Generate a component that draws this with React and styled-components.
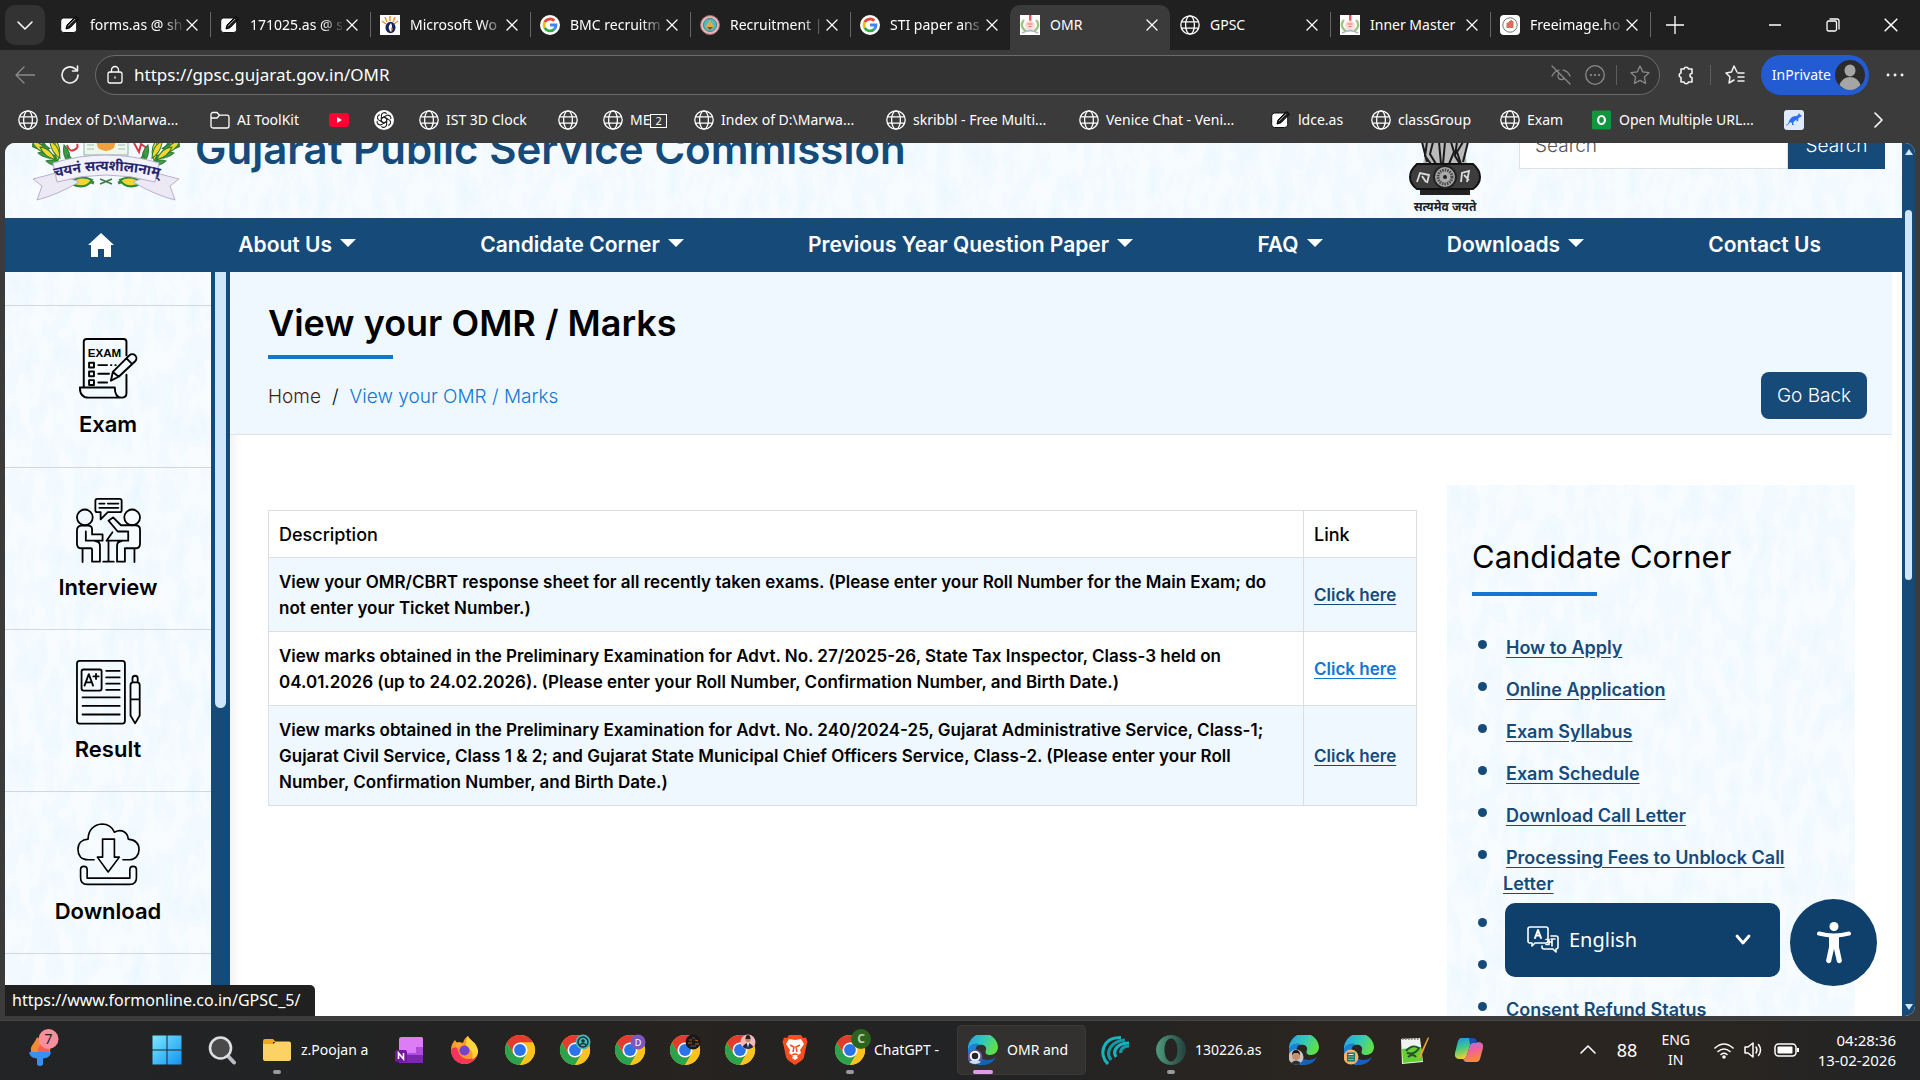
import React from "react";
import styled, { createGlobalStyle, css } from "styled-components";

const navy = "#164a79";
const siteFont = `Inter, "Noto Sans", "Liberation Sans", sans-serif`;
const uiFont = `"Noto Sans", "Open Sans", "Liberation Sans", sans-serif`;

const paper = `url("data:image/svg+xml,${encodeURIComponent(
  `<svg xmlns='http://www.w3.org/2000/svg' width='480' height='480'><filter id='n' x='0' y='0' width='100%' height='100%'><feTurbulence type='fractalNoise' baseFrequency='0.07 0.03' numOctaves='3' seed='8' stitchTiles='stitch'/><feColorMatrix values='0 0 0 0 0.84  0 0 0 0 0.94  0 0 0 0 1  1.9 0 0 0 -0.6'/></filter><rect width='480' height='480' filter='url(#n)'/></svg>`
)}")`;

const Global = createGlobalStyle`
  * { box-sizing: border-box; }
  body { margin: 0; background: #3b3b3b; font-family: ${siteFont}; color: #000; overflow: hidden; }
  button, input, select { font: inherit; }
  button { cursor: pointer; }
  svg { display: block; flex: none; }
`;

const textured = css`
  background: #f8fcff ${paper};
`;

const Screen = styled.div`
  display: flex;
  flex-direction: column;
  height: 100vh;
`;

const PlainButton = styled.button`
  display: flex;
  align-items: center;
  justify-content: center;
  padding: 0;
  border: 0;
  background: none;
  color: inherit;
`;

/* ---------- tab strip ---------- */
const TabStrip = styled.div`
  display: flex;
  align-items: flex-end;
  height: 50px;
  flex: none;
  background: #202020;
  color: #fff;
  font: 14px/20px ${uiFont};
`;
const TabMenu = styled(PlainButton)`
  width: 40px;
  height: 40px;
  margin: 0 5px 5px;
  border-radius: 10px;
  background: #333;
`;
const Tab = styled.div`
  position: relative;
  display: flex;
  align-items: center;
  gap: 10px;
  width: 160px;
  height: 45px;
  padding: 0 8px 5px 10px;
  border-radius: 10px 10px 0 0;
  background: ${(p) => (p.$active ? "#3b3b3b" : "transparent")};
  &::after {
    content: "";
    display: ${(p) => (p.$rule ? "block" : "none")};
    position: absolute;
    right: -1px;
    top: 7px;
    width: 1px;
    height: 25px;
    background: #666;
  }
`;
const TabName = styled.span`
  flex: 1;
  min-width: 0;
  overflow: hidden;
  white-space: nowrap;
  mask-image: ${(p) => (p.$fade ? "linear-gradient(90deg, #000 78%, rgba(0, 0, 0, 0.15) 100%)" : "none")};
`;
const CloseTab = styled(PlainButton)`
  width: 20px;
  height: 20px;
  margin-left: -10px;
`;
const NewTab = styled(PlainButton)`
  width: 50px;
  height: 50px;
`;
const WindowButtons = styled.div`
  display: flex;
  height: 50px;
  margin-left: auto;
`;
const WindowButton = styled(PlainButton)`
  width: 58px;
`;

/* ---------- toolbar ---------- */
const Toolbar = styled.div`
  display: flex;
  align-items: center;
  height: 50px;
  flex: none;
  padding: 0 5px 0 0;
  background: #3b3b3b;
  color: #fff;
  font: 17px/24px ${uiFont};
`;
const ToolButton = styled(PlainButton)`
  width: ${(p) => p.$w || 40}px;
  height: 40px;
  color: ${(p) => (p.$dim ? "#8a8a8a" : "#f2f2f2")};
`;
const Address = styled.div`
  display: flex;
  flex: 1;
  align-items: center;
  height: 40px;
  margin: 0 6px 0 5px;
  padding-left: 9px;
  border: 1px solid #6b6b6b;
  border-radius: 20px;
  background: #333;
`;
const Url = styled.input`
  flex: 1;
  min-width: 0;
  margin-left: 9px;
  padding: 0;
  border: 0;
  outline: 0;
  background: none;
  color: #fff;
`;
const Rule = styled.span`
  width: 1px;
  height: 20px;
  margin: 0 4px;
  background: #5e5e5e;
`;
const Private = styled(PlainButton)`
  gap: 4px;
  height: 40px;
  margin: 0 6px;
  padding: 0 4px 0 11px;
  border-radius: 20px;
  background: #225bd2;
  font-size: 14px;
`;

/* ---------- bookmarks ---------- */
const Bookmarks = styled.nav`
  display: flex;
  align-items: center;
  height: 43px;
  flex: none;
  padding: 0 26px 3px 18px;
  background: #3b3b3b;
  font: 14px/20px ${uiFont};
`;
const Bookmark = styled.a`
  display: flex;
  align-items: center;
  gap: 7px;
  width: ${(p) => p.$w}px;
  color: #fff;
  text-decoration: none;
  white-space: nowrap;
`;
const Boxed = styled.span`
  display: inline-block;
  padding: 0 4px;
  border: 1px solid #fff;
  font-size: 11px;
  line-height: 12px;
`;
const More = styled(PlainButton)`
  width: 32px;
  height: 32px;
  margin-left: auto;
  color: #fff;
`;

/* ---------- browser viewport ---------- */
const Viewport = styled.div`
  position: relative;
  display: flex;
  flex: 1;
  min-height: 0;
  margin: 0 5px 4px;
  overflow: hidden;
  border-radius: 10px 10px 10px 0;
  background: #fff;
`;
const Site = styled.div`
  display: flex;
  flex: 1;
  min-width: 0;
  flex-direction: column;
`;
const ScrollTrack = styled.div`
  display: flex;
  flex: none;
  flex-direction: column;
  align-items: center;
  justify-content: space-between;
  width: ${(p) => p.$w}px;
  padding: ${(p) => p.$pad || "0"};
  background: ${navy};
`;
const Thumb = styled.div`
  width: ${(p) => p.$w}px;
  height: ${(p) => p.$h};
  border-radius: ${(p) => p.$round};
  background: #d0e6fb;
`;
const ScrollBody = styled.div`
  flex: 1;
  padding-top: 55px;
`;

const Masthead = styled.header`
  display: flex;
  align-items: flex-end;
  height: 75px;
  flex: none;
  padding: 0 17px 0 27px;
  overflow: hidden;
  ${textured}
`;
const Brand = styled.div`
  flex: 1;
  margin: 0 0 47px 15px;
  color: ${navy};
  font-size: 42px;
  font-weight: 600;
  line-height: 44px;
  white-space: nowrap;
`;
const SearchForm = styled.form`
  display: flex;
  height: 48px;
  margin: 0 0 49px 38px;
  font-size: 19px;
  font-weight: 300;
`;
const SearchBox = styled.input`
  width: 269px;
  padding: 0 15px;
  border: 1px solid #dee2e6;
  background: #fff;
  &::placeholder { color: #555; opacity: 1; }
`;
const SearchButton = styled.button`
  width: 97px;
  padding: 0;
  border: 0;
  background: ${navy};
  color: #fff;
`;

const MainNav = styled.nav`
  display: flex;
  align-items: center;
  justify-content: space-between;
  height: 54px;
  flex: none;
  padding: 0 81px 0 83px;
  background: ${navy};
`;
const NavLink = styled.a`
  display: flex;
  align-items: center;
  gap: 8px;
  color: #fff;
  font-size: 21px;
  font-weight: 600;
  line-height: 30px;
  text-decoration: none;
  white-space: nowrap;
`;
const Caret = styled.span`
  margin-bottom: 4px;
  border: 8px solid transparent;
  border-top-color: #fff;
  border-bottom: 0;
`;

const Body = styled.div`
  display: flex;
  flex: 1;
  min-height: 0;
`;
const QuickLinks = styled.aside`
  display: flex;
  flex: none;
  width: 225px;
  overflow: hidden;
`;
const QuickList = styled.div`
  flex: 1;
  padding-top: 33px;
  ${textured}
`;
const QuickLink = styled.a`
  display: flex;
  flex-direction: column;
  align-items: center;
  justify-content: center;
  gap: 9px;
  height: 162px;
  border-top: 1px solid #d3d7da;
  color: #000;
  font-size: 22px;
  font-weight: 600;
  line-height: 28px;
  text-decoration: none;
`;
const QuickEnd = styled.div`
  border-top: 1px solid #d3d7da;
`;

const Main = styled.main`
  flex: 1;
  min-width: 0;
  overflow: hidden;
  box-shadow: inset 14px 0 12px -10px rgba(0, 0, 0, 0.06);
`;
const Banner = styled.section`
  display: flex;
  align-items: flex-end;
  justify-content: space-between;
  height: 163px;
  margin-right: 10px;
  padding: 0 25px 15px 38px;
  border-bottom: 1px solid #dee2e6;
  background: #f0f8ff;
`;
const PageTitle = styled.h1`
  margin: 0 0 8px;
  font-size: 36px;
  font-weight: 600;
  line-height: 48px;
`;
const Underline = styled.div`
  width: 125px;
  height: 4px;
  background: #1276d2;
`;
const Crumbs = styled.nav`
  display: flex;
  gap: 11px;
  margin: 23px 0 7px;
  font-size: 19px;
  font-weight: 300;
  line-height: 30px;
`;
const Crumb = styled.a`
  color: ${(p) => (p.$current ? "#1276d2" : "#4a1c0c")};
  text-decoration: none;
`;
const BackButton = styled.button`
  width: 106px;
  height: 47px;
  padding: 0;
  border: 0;
  border-radius: 8px;
  background: ${navy};
  color: #fff;
  font-size: 19px;
  font-weight: 300;
`;
const Content = styled.div`
  display: flex;
  align-items: flex-start;
  gap: 30px;
  padding: 50px 47px 0 38px;
`;
const Notices = styled.table`
  flex: 1;
  min-width: 0;
  margin-top: 25px;
  border-collapse: collapse;
  font-size: 17px;
  line-height: 26px;
  text-align: left;
`;
const NoticeRow = styled.tr`
  background: ${(p) => (p.$tint ? "#f0f8ff" : "#fff")};
`;
const cell = css`
  padding: 11px 10px 10px;
  border: 1px solid #dcdfe2;
`;
const HeadCell = styled.th`
  ${cell}
  padding-bottom: 9px;
  font-size: 18px;
  font-weight: 500;
  &:last-child { width: 113px; }
`;
const Cell = styled.td`
  ${cell}
  font-weight: 600;
`;
const TextLink = styled.a`
  color: ${(p) => (p.$bright ? "#1276d2" : navy)};
  text-underline-offset: 3px;
  white-space: nowrap;
`;

const Corner = styled.aside`
  flex: none;
  width: 408px;
  min-height: 620px;
  padding: 50px 25px 0;
  ${textured}
`;
const CornerTitle = styled.h2`
  margin: 0 0 13px;
  font-size: 31px;
  font-weight: 400;
  line-height: 44px;
`;
const CornerList = styled.ul`
  display: flex;
  flex-direction: column;
  gap: 16px;
  margin: 39px 0 0;
  padding: 0;
  list-style: none;
`;
const CornerItem = styled.li`
  display: flex;
  gap: 16px;
  min-height: 26px;
  padding: 0 10px 0 6px;
  color: ${navy};
  font-size: 18px;
  line-height: 26px;
  text-indent: 3px;
  a { color: inherit; font-weight: 600; text-underline-offset: 3px; }
`;
const Bullet = styled.span`
  flex: none;
  width: 9px;
  height: 9px;
  margin-top: 5px;
  border-radius: 50%;
  background: ${navy};
`;

/* ---------- floating widgets ---------- */
const Floating = styled.div`
  position: absolute;
  right: 38px;
  bottom: 30px;
  display: flex;
  align-items: flex-start;
  gap: 10px;
`;
const Language = styled.label`
  display: flex;
  align-items: center;
  gap: 10px;
  width: 275px;
  height: 74px;
  margin-top: 4px;
  padding: 0 22px;
  border-radius: 10px;
  background: #0f406b;
  color: #fff;
`;
const LanguageSelect = styled.select`
  flex: 1;
  padding: 0;
  border: 0;
  outline: 0;
  appearance: none;
  background: none;
  color: #fff;
  font: 20px/28px ${uiFont};
`;
const Access = styled(PlainButton)`
  width: 87px;
  height: 87px;
  border-radius: 50%;
  background: #0f406b;
  color: #fff;
`;
const StatusBubble = styled.div`
  position: absolute;
  left: 0;
  bottom: 0;
  height: 31px;
  padding: 0 15px 0 7px;
  border-radius: 0 5px 0 0;
  background: #202020;
  color: #fff;
  font: 16px/30px ${uiFont};
`;

/* ---------- taskbar ---------- */
const Taskbar = styled.footer`
  display: flex;
  align-items: center;
  height: 60px;
  flex: none;
  padding: 0 24px 2px 0;
  border-top: 1px solid #454545;
  background: linear-gradient(90deg, #222426, #232323 25%, #262320 36%, #222325 50%, #2a2520 70%, #292521 90%, #222426);
  color: #fff;
  font: 14px/20px ${uiFont};
`;
const Weather = styled(PlainButton)`
  width: 90px;
  height: 50px;
  margin-right: 49px;
`;
const TaskApp = styled(PlainButton)`
  position: relative;
  justify-content: ${(p) => (p.$label ? "flex-start" : "center")};
  gap: 9px;
  width: ${(p) => (p.$label ? 129 : 51)}px;
  height: 50px;
  margin: 0 2px;
  padding: 0 0 0 ${(p) => (p.$label ? 11 : 0)}px;
  border-radius: 5px;
  background: ${(p) => (p.$active ? "#323130" : "none")};
  box-shadow: ${(p) => (p.$active ? "inset 0 0 0 1px #3b3a39" : "none")};
  white-space: nowrap;
  &::after {
    content: "";
    display: ${(p) => (p.$mark ? "block" : "none")};
    position: absolute;
    left: ${(p) => (p.$active ? 16 : 22)}px;
    bottom: 1px;
    width: ${(p) => (p.$active ? 20 : 8)}px;
    height: 4px;
    border-radius: 2px;
    background: ${(p) => (p.$active ? "#dc9fe6" : "#9a9a9a")};
  }
`;
const Tray = styled.div`
  display: flex;
  align-items: center;
  gap: 10px;
  margin-left: auto;
`;
const TrayNumber = styled.span`
  margin: 0 14px 0 11px;
  font-size: 18px;
`;
const TrayText = styled.div`
  text-align: ${(p) => p.$align};
  line-height: 20px;
`;
const TrayLang = styled(TrayText)`
  margin-right: 14px;
`;
const Clock = styled(TrayText)`
  min-width: 86px;
  font-size: 15px;
`;

/* ---------- drawings ---------- */
const Line = ({ s = 20, vb = "0 0 20 20", w = 1.3, children }) => (
  <svg width={s} height={s} viewBox={vb} fill="none" stroke="currentColor" strokeWidth={w} strokeLinecap="round" strokeLinejoin="round">
    {children}
  </svg>
);
const Globe = () => (
  <Line>
    <circle cx="10" cy="10" r="9.2" />
    <ellipse cx="10" cy="10" rx="4.4" ry="9.2" />
    <path d="M1.6 6.8h16.8M1.6 13.2h16.8" />
  </Line>
);
const Cross = ({ s = 12 }) => (
  <Line s={s} vb="0 0 12 12">
    <path d="M1 1l10 10M11 1L1 11" />
  </Line>
);
const Pencil = () => (
  <svg width="20" height="20" viewBox="0 0 20 20">
    <rect x=".7" y="3" width="16" height="14.5" rx="3" fill="#fff" stroke="#111" strokeWidth="1" />
    <path d="M6 14l1-4L15.500 1.500l3 2.500L10 12.800z" fill="#222" stroke="#000" />
    <path d="M8 11l7-7" stroke="#999" />
  </svg>
);
const Google = () => (
  <svg width="20" height="20" viewBox="0 0 20 20">
    <circle cx="10" cy="10" r="10" fill="#fff" />
    <g fill="none" strokeWidth="2.8">
      <path d="M14.300 5.800A6 6 0 0 0 4.700 7.200" stroke="#ea4335" />
      <path d="M4.700 7.200a6 6 0 0 0 0 5.600" stroke="#fbbc05" />
      <path d="M4.700 12.800a6 6 0 0 0 9.300 1.600" stroke="#34a853" />
      <path d="M14 14.400a6 6 0 0 0 2-4.400h-6" stroke="#4285f4" />
    </g>
  </svg>
);
const Sun = () => (
  <svg width="20" height="20" viewBox="0 0 20 20">
    <path fill="#fff" d="M0 0h20v20H0z" />
    <path d="M10 1v5M5 2l2 5M15 2l-2 5M2 6l4 3M18 6l-4 3" stroke="#f0962e" strokeWidth="1.500" />
    <ellipse cx="10.500" cy="12.500" rx="5" ry="5.800" fill="#15245f" />
    <path d="M11 8c-3 3-3 6 0 9 1.500-3 1.500-6 0-9z" fill="#fff" />
    <path d="M11 12l2 2-2 3z" fill="#f0962e" />
  </svg>
);
const Seal = () => (
  <svg width="20" height="20" viewBox="0 0 20 20">
    <circle cx="10" cy="10" r="9.500" fill="#e5b6bb" stroke="#a96a72" />
    <circle cx="10" cy="10" r="6.500" fill="#53b9cd" stroke="#2f8f68" />
    <path d="M5.500 12l4.500-7 4 7-4 3z" fill="#e5a93c" />
    <path d="M7 12h6l-3 3z" fill="#8a4a20" />
  </svg>
);
const Crest = () => (
  <svg width="20" height="20" viewBox="0 0 20 20">
    <path fill="#fff" d="M0 0h20v20H0z" />
    <path d="M9 0h2.500v6H9z" fill="#e35b55" />
    <circle cx="10" cy="10.500" r="5" fill="#fbdcd6" />
    <path d="M7.500 9h5M8.500 11.500h3" stroke="#e0706a" strokeWidth="1.200" />
    <path d="M4 5C0 9 2 14 6 16M16 5c4 4 2 9-2 11" fill="none" stroke="#9cc684" strokeWidth="2.400" />
    <path d="M2 18c5-3 11-3 16 0" fill="none" stroke="#b3b3cf" strokeWidth="1.600" />
  </svg>
);
const Hand = () => (
  <svg width="20" height="20" viewBox="0 0 20 20">
    <rect width="20" height="20" rx="4" fill="#fff" />
    <circle cx="10" cy="10" r="7.200" fill="none" stroke="#777" />
    <path d="M6.500 8v5h7V6h-1.500v-1h-1.500V6H9v1z" fill="#e06a5c" />
  </svg>
);
const Folder = () => (
  <Line>
    <path d="M1 4.500a2 2 0 0 1 2-2h4l2.500 2.700H17a2 2 0 0 1 2 2V16a2 2 0 0 1-2 2H3a2 2 0 0 1-2-2zM1 8h6l2.500-2.800" />
  </Line>
);
const Tube = () => (
  <svg width="20" height="20" viewBox="0 0 20 20">
    <rect y="3" width="20" height="14" rx="3" fill="#ff0033" />
    <path d="M8 7l5 3-5 3z" fill="#fff" />
  </svg>
);
const Knot = () => (
  <svg width="20" height="20" viewBox="0 0 20 20">
    <circle cx="10" cy="10" r="10" fill="#fff" />
    <g fill="none" stroke="#222" strokeWidth="1.100">
      {[0, 60, 120, 180, 240, 300].map((a) => (
        <path key={a} transform={`rotate(${a} 10 10)`} d="M7.400 8.500V5.200a3 3 0 0 1 5.200-1.500M7.400 8.500L10 7l3.500 2" />
      ))}
    </g>
  </svg>
);
const GreenO = () => (
  <svg width="20" height="20" viewBox="0 0 20 20">
    <rect x="0" y=".5" width="19" height="19" rx="1.500" fill="#10963c" />
    <ellipse cx="9.500" cy="10" rx="3.400" ry="4" fill="none" stroke="#fff" strokeWidth="2.200" />
  </svg>
);
const Kangaroo = () => (
  <svg width="20" height="20" viewBox="0 0 20 20">
    <rect width="20" height="20" rx="3" fill="#dfeafc" />
    <path d="M2.500 16c2-1 2-6 5-8.500C10 5.500 12 7 14 5l1-2 .8 1.500 2.200 1-1.500 1.500-2 1-.5 3-1.500.5v-2l-2.500 2-1 2.500 1.500 1H8l0-2-2-1c-1 2-1.500 3-3.500 2z" fill="#2c6df2" />
  </svg>
);
const Home = () => (
  <svg width="26" height="24" viewBox="0 0 26 24" fill="#fff">
    <path d="M13 0L26 12h-3v12h-7v-8h-6v8H3V12H0z" />
  </svg>
);
const ExamArt = () => (
  <Line s={65} vb="0 1 67 67" w={2}>
    <path d="M8 54V7q0-3 3-3h38q3 0 3 3v14M52 41v19q0 4.500-5 4.500H13Q4 64.500 4 54h36q0 10.500 7 10.500" />
    <path d="M13.500 28.500h5v5h-5zM13.500 37.500h5v5h-5zM13.500 46.500h5v5h-5zM23 31h9M36 31h.5M40.500 31h.5M23 40h11M23 49h9" />
    <path d="M36 47l2-9 17-17a4 4 0 0 1 6 6L44 43zM38 38l6 5M52 24l6 6" />
    <text x="12" y="23" fontSize="12" fontWeight="700" fontFamily="Liberation Sans, sans-serif" fill="currentColor" stroke="none">EXAM</text>
  </Line>
);
const InterviewArt = () => (
  <Line s={67} vb="222 170 204 204" w={5.5}>
    <path d="M290 176h68q6 0 6 6v28q0 6-6 6h-36l-22 22v-22h-10q-6 0-6-6v-28q0-6 6-6zM296 190h16M322 190h32M296 203h58" />
    <circle cx="252" cy="232" r="24" />
    <circle cx="396" cy="232" r="24" />
    <path d="M306 303h-51v-28M228 312v-40q0-15 15-15h19q12 0 12 12v15h32v19M228 312q0 14 14 14h28q4 0 4 4v37h24v-49q0-12-14-14M245 328v40" />
    <path d="M318 303l18-26M318 303h66v-28h-32l-28-33 14-10 24 24h44q14 0 14 14v42q0 14-14 14h-32v41h-24v-49q0-12 14-14M403 328v40M324 304v62M308 367h32" />
  </Line>
);
const ResultArt = () => (
  <Line s={67} vb="222 656 204 204" w={5.5}>
    <rect x="228" y="662" width="146" height="191" rx="8" />
    <rect x="242" y="688" width="61" height="64" rx="6" />
    <path d="M251 737l13-35 13 35M255 727h18M278 709h16M286 701v16" />
    <path d="M317 692h41M317 712h41M317 731h41M317 750h41M245 773h113M245 799h113M245 825h113" />
    <path d="M391 735q0-8 8-8h12q8 0 8 8v93l-14 24-14-24zM391 779h28M397 727v-12q0-8 8-8t8 8v12" />
  </Line>
);
const DownloadArt = () => (
  <Line s={67} vb="222 242 204 204" w={5}>
    <path d="M280 360h-18c-22 0-31-15-31-32 0-18 12-30 31-31 0-27 18-45 42-46 18 0 32 11 38 25 23-12 41 2 42 21 21 2 33 14 33 32s-12 31-29 31h-20" />
    <path d="M306 297h36v55h15l-34 45-33-45h16zM239 390q0-10 10-10t10 10v26h130v-26q0-10 10-10t10 10v25q0 20-20 20H259q-20 0-20-20z" />
  </Line>
);

const Leaves = ({ flip }) => (
  <g transform={flip ? "translate(148 0) scale(-1 1)" : undefined}>
    <path d="M10 0c10 18 24 34 52 42" stroke="#3c8a3f" strokeWidth="3" fill="none" />
    {[[-2, 4, 10], [0, 0, 40], [6, 12, 14], [8, 6, 40], [14, 20, 14], [24, 0, 85], [32, 4, 75], [18, 0, 60], [36, 14, 70]].map(([x, y, r], i) => (
      <path key={i} transform={`translate(${x} ${y}) rotate(${r})`} d="M0 0q9-6 20 0q-11 5-20 0z" fill={i % 2 ? "#f3d72e" : "#3f9a44"} stroke="#2c7a36" />
    ))}
    <path d="M38 42q10-9 22-3q-7 11-22 3z" fill="#f3d72e" stroke="#2c8a3c" strokeWidth="2" />
  </g>
);
const EmblemBox = styled.div`
  margin-bottom: 17px;
`;
const Emblem = () => (
  <EmblemBox>
    <svg width="148" height="60" viewBox="0 0 148 60">
      <rect x="52" y="-8" width="44" height="22" fill="#eef6ee" stroke="#8cb6a4" />
      <path d="M64 0h20l-2 7q-8 6-16 0z" fill="#f0a03c" />
      <path d="M55 4h7M55 8h7M86 4h7M86 8h7" stroke="#9cc3b4" />
      <path d="M35 4q2 7 7 5t3-6M102 2l5 9 2-8 7 5" fill="none" stroke="#d33c46" strokeWidth="2" />
      <Leaves />
      <Leaves flip />
      <path d="M68 38l12 5M80 38l-12 5" stroke="#3b7d3f" strokeWidth="1.500" />
      <path d="M24 32L1 38l9 7-5 14q20-5 42-18zM124 32l23 6-9 7 5 14q-20-5-42-18z" fill="#ece9f4" stroke="#b7afcf" />
      <path d="M21 22q53-16 106 0l-4 19q-49-14-98 0z" fill="#f3f1fa" stroke="#b7afcf" />
      <path id="motto" d="M25 36q49-13 100 0" fill="none" />
      <text fontSize="14" fontWeight="700" fill="#26256e" fontFamily={uiFont}>
        <textPath href="#motto" startOffset="50%" textAnchor="middle">चयनं सत्यशीलानाम्</textPath>
      </text>
    </svg>
  </EmblemBox>
);
const Lions = () => (
  <svg width="72" height="76" viewBox="0 0 72 76">
    <path d="M12 0q5 10 2 22h44q-3-12 2-22z" fill="#bbb" />
    <path d="M13 0l5 20M18 0l-2 14 6 8M24 0l-3 12 6 10M30 0l2 22M36 0l-2 22M42 0l3 10-5 12M48 0l-2 14 5 8M54 0l-6 10 4 12M59 0l-5 20" stroke="#1b1b1b" strokeWidth="2" fill="none" />
    <path d="M8 22h56q7 6 7 13t-7 12H8q-7-5-7-12t7-13z" fill="#3d3d3d" stroke="#111" strokeWidth="2" />
    <circle cx="36" cy="35" r="11" fill="#aaa" stroke="#222" strokeWidth="2" />
    <circle cx="36" cy="35" r="7" fill="none" stroke="#444" strokeWidth="3" strokeDasharray="1.500 1" />
    <circle cx="36" cy="35" r="2" fill="#222" />
    <path d="M8 40l3-9 9 2-2 8M13 34l4 6M52 40l1-9 7-2-2 11M55 33l5 5" stroke="#ddd" strokeWidth="1.800" fill="none" />
    <path d="M11 48h50v5H11z" fill="#222" />
    <text x="36" y="69" fontSize="12" fontWeight="700" textAnchor="middle" fill="#222" fontFamily={uiFont}>सत्यमेव जयते</text>
  </svg>
);

const Icon = ({ children, vb = "0 0 30 30", w = 30, h = 30 }) => (
  <svg width={w} height={h} viewBox={vb}>{children}</svg>
);
const Chrome = ({ badge }) => (
  <svg width="30" height="30" viewBox="0 0 30 30" overflow="visible">
    <circle cx="15" cy="15" r="15" fill="#fcc31e" />
    <path d="M15 15L2 7.500A15 15 0 0 1 28 7.500H15z" fill="#e33b2e" />
    <path d="M2 7.500A15 15 0 0 0 15 30l6.500-11.300L15 15 8.500 18.700z" fill="#2ba24c" />
    <path d="M2 7.500L8.500 18.700 15 8z" fill="#e33b2e" />
    <path d="M15 30A15 15 0 0 0 28 7.500H15L21.500 18.700z" fill="#fcc31e" />
    <circle cx="15" cy="15" r="7.500" fill="#fff" />
    <circle cx="15" cy="15" r="5.900" fill="#2a73e8" />
    {badge === "person" && (
      <g>
        <circle cx="23" cy="7" r="7.500" fill="#4fb5b5" />
        <circle cx="23" cy="7" r="5" fill="none" stroke="#0c3036" strokeWidth="1.400" />
        <circle cx="23" cy="6" r="1.800" fill="#0c3036" />
        <path d="M20 10q3-3 6 0" stroke="#0c3036" strokeWidth="1.400" fill="none" />
      </g>
    )}
    {badge === "D" && (
      <g>
        <circle cx="23" cy="7" r="7.500" fill="#7b57c2" />
        <text x="23" y="10.500" fontSize="9" textAnchor="middle" fill="#fff">D</text>
      </g>
    )}
    {badge === "night" && (
      <g>
        <circle cx="23" cy="7" r="7.500" fill="#1d1613" />
        <path d="M18 8h4M25 9h4M19 5h3M25 5l3 1" stroke="#a8642e" strokeWidth="1.200" />
        <path d="M20 11h6M22 3h3" stroke="#3d5c9a" />
      </g>
    )}
    {badge === "man" && (
      <g>
        <circle cx="23" cy="7" r="7.500" fill="#f5b8ba" />
        <circle cx="23" cy="4.500" r="2.600" fill="#b98767" />
        <path d="M20.500 4q0-4 2.500-4t2.500 4z" fill="#222" />
        <path d="M17.500 12q5-8 11 0-5 4-11 0z" fill="#1e2a44" />
        <path d="M22 8h2l-1 5z" fill="#fff" />
      </g>
    )}
    {badge === "C" && (
      <g>
        <circle cx="26" cy="4" r="10" fill="#2c641f" />
        <text x="26" y="8" fontSize="12" fontWeight="700" textAnchor="middle" fill="#b9d2b0">C</text>
      </g>
    )}
  </svg>
);
const Edge = ({ badge, id }) => (
  <Icon>
    <defs>
      <linearGradient id={`t${id}`} x1="0" x2="1" y2=".4">
        <stop offset="0" stopColor="#2a9be0" />
        <stop offset=".5" stopColor="#30c3c9" />
        <stop offset="1" stopColor="#5ee04c" />
      </linearGradient>
    </defs>
    <path d="M0 15A15 15 0 0 1 30 12c0 5-4 8-8 8-5 0-5-3-4-5 1-4-3-6-7-5-5 0-10 3-11 8z" fill={`url(#t${id})`} />
    <path d="M0 15c1-5 6-7 11-6-4 2-4 8 0 12 4 5 12 5 17 1-3 6-8 8-13 8C6 30 0 23 0 15z" fill="#1560b8" />
    <path d="M11 9c-6 4-7 15 3 20.900C6 30 0 23 0 15c1-5 6-7 11-6z" fill="#1b82d8" />
    {badge === "eye" && (
      <g>
        <circle cx="7" cy="22" r="7.500" fill="#68579e" />
        <circle cx="7" cy="21" r="4.300" fill="#20242c" stroke="#fff" strokeWidth="2" />
        <path d="M1 27q6-4 12 0-6 4-12 0z" fill="#bfe6f5" />
      </g>
    )}
    {badge === "face" && (
      <g>
        <circle cx="7" cy="22" r="7.500" fill="#c9c2bd" />
        <circle cx="7" cy="21" r="4" fill="#c68e6c" />
        <path d="M3 20q0-5 4-5t4 5l-2-2H5z" fill="#1d1512" />
        <path d="M2 28q5-5 10 0-5 3-10 0z" fill="#2b3038" />
      </g>
    )}
    {badge === "calc" && (
      <g>
        <circle cx="7" cy="22" r="7.500" fill="#f3b36a" />
        <rect x="3" y="17.500" width="8" height="9" fill="#15796c" />
        <path d="M4.500 19.500h5M4.500 22h1M6.500 22h1M8.500 22h1M4.500 24.500h1M6.500 24.500h1M8.500 24.500h1" stroke="#e5f5ee" />
      </g>
    )}
  </Icon>
);
const Torch = () => (
  <Icon w={32} h={44} vb="0 0 32 44">
    <path d="M2 24C1 17 5 17 8 9c3 4 3-2 7-4 6 4 7 12 6 19z" fill="#f58a32" />
    <path d="M9 24c-1-6 3-6 5-11 5 4 7 7 6 11z" fill="#f45f55" />
    <path d="M0 24h22q-1 6-8 6.500v6q-3 3-6 0v-6Q1 30 0 24z" fill="#3b8ff0" />
    <circle cx="19.500" cy="11" r="10" fill="#f98f9d" />
    <text x="19.500" y="16" fontSize="14" textAnchor="middle" fill="#222" fontFamily={uiFont}>7</text>
  </Icon>
);
const Windows = () => (
  <Icon>
    <defs>
      <linearGradient id="win" x2="1" y2="1">
        <stop offset="0" stopColor="#7ce8fd" />
        <stop offset="1" stopColor="#1293f2" />
      </linearGradient>
    </defs>
    <path d="M.5 .5h14v14H.5zM15.500 .5h14v14h-14zM.5 15.500h14v14H.5zM15.500 15.500h14v14h-14z" fill="url(#win)" />
  </Icon>
);
const Lens = () => (
  <Icon>
    <path d="M20 20l7 7.500" stroke="#b9bcc0" strokeWidth="4" strokeLinecap="round" />
    <circle cx="13.500" cy="13" r="10.500" fill="#4a4a4a" stroke="#dcdee0" strokeWidth="2.600" />
  </Icon>
);
const Files = () => (
  <Icon>
    <path d="M1 6q0-2 2-2h8l3 3h-3v5H1z" fill="#f0a81c" />
    <path d="M1 9h10l3-2.500h13q2 0 2 2V24q0 2-2 2H3q-2 0-2-2z" fill="#fbd263" />
  </Icon>
);
const OneNote = () => (
  <Icon>
    <rect x="4" y="2" width="24" height="26" rx="2" fill="#b04ae0" />
    <path d="M6 2h20q2 0 2 2v8h-7v6H4V4z" fill="#dd7cf7" />
    <path d="M4 20h24v6q0 2-2 2H4z" fill="#7d26b3" />
    <rect x="0" y="15" width="12" height="12" rx="2" fill="#7415a3" />
    <path d="M3.500 24v-6l5 6v-6" stroke="#fff" strokeWidth="1.600" fill="none" />
  </Icon>
);
const Fox = () => (
  <Icon>
    <path d="M1 15c0-5 2-8 4-10l2 3c3-1 4-1 6 0 1-4 3-6 5-7 1 4 9 6 10 15 0 7-6 13-13.500 13S1 22 1 15z" fill="#ff9a26" />
    <path d="M1 15c0 9 7 14 13.500 14S27 24 28 18c-3 4-6 6-9 6-9 0-10-6-12-11-3-1-5 0-6 2z" fill="#f5365a" />
    <path d="M18 1c1 4 9 6 10 15 0 4-3 8-6 8 3-7-3-11-6-13 0-4 0-7 2-10z" fill="#ffd53d" />
    <circle cx="14.500" cy="15.500" r="5" fill="#7443cf" />
    <path d="M5 8c4-2 7 0 8 2-3 1-5 1-6 3z" fill="#ffa735" />
  </Icon>
);
const Brave = () => (
  <Icon>
    <path d="M9 0h12l2 3 3-.5L27.500 7l-1 3L24 22q-.5 2-3 4l-6 4-6-4q-2.500-2-3-4L3.500 10l-1-3L4 2.500 7 3z" fill="#fb4d20" />
    <path d="M15 5l6-1 3 5-4 6 1 3-4 3 1 2-3 2-3-2 1-2-4-3 1-3-4-6 3-5z" fill="#fff" />
    <path d="M10 10l4 2-1 5M20 10l-4 2 1 5M12 20q3-2 6 0" stroke="#fb4d20" strokeWidth="1.500" fill="none" />
  </Icon>
);
const Swirl = () => (
  <Icon>
    <g fill="none" stroke="#16b5bd" strokeWidth="3.200">
      <path d="M7 29C-3 19 2 2 20 2.500" />
      <path d="M10 25C4 17 10 6 24 5" stroke="#1498a4" />
      <path d="M15 22C11 15 17 8 28 8" />
      <path d="M20 18c-1-4 3-7 8-7" stroke="#1498a4" />
    </g>
  </Icon>
);
const Ring = () => (
  <Icon>
    <defs>
      <linearGradient id="ring">
        <stop offset="0" stopColor="#4d9b7d" />
        <stop offset="1" stopColor="#24403d" />
      </linearGradient>
    </defs>
    <path fillRule="evenodd" d="M15 0a15 15 0 1 0 .1 0zM15 3.500c4 0 6.500 5 6.500 11.500S19 26.500 15 26.500 8.500 21.500 8.500 15 11 3.500 15 3.500z" fill="url(#ring)" />
  </Icon>
);
const Npp = () => (
  <Icon>
    <path d="M2 4l19-1 3 24-21 2z" fill="#f1f3ee" />
    <path d="M3 14l19-2 1.500 14L4 28z" fill="#63cf34" />
    <path d="M3 4h18" stroke="#888" strokeWidth="2" strokeDasharray="1.500 1.500" />
    <path d="M7 16q6-7 13-3-4 7-12 5M9 22q5-4 8 0" fill="none" stroke="#24502a" strokeWidth="2" />
    <path d="M29 2l-9 19-1 3 3-2 8-19z" fill="#f0a12c" />
  </Icon>
);
const Copilot = () => (
  <Icon>
    <defs>
      <linearGradient id="cpA" x2=".3" y2="1">
        <stop offset="0" stopColor="#1b8ff0" />
        <stop offset=".5" stopColor="#3cc98a" />
        <stop offset="1" stopColor="#f3cf2b" />
      </linearGradient>
      <linearGradient id="cpB" x2=".3" y2="1">
        <stop offset="0" stopColor="#b06cf0" />
        <stop offset=".5" stopColor="#f0609a" />
        <stop offset="1" stopColor="#fb8a3c" />
      </linearGradient>
    </defs>
    <path d="M7 3h11q3 0 4 4h-3q-2 0-3 3l-3 10q-1 4-4 4H6q-6 0-5-6L4 6q1-3 3-3z" fill="url(#cpA)" />
    <path d="M23 27H12q-2 0-3-3 3 0 4-4l3-10q1-3 4-3h4q6 0 5 6l-3 11q-1 3-3 3z" fill="url(#cpB)" />
    <path d="M15 3h4q3 0 4 4l1 1h-5q-2 0-3 2z" fill="#1c4bb8" />
  </Icon>
);
const Translate = () => (
  <Line s={32} vb="0 0 32 32" w={1.6}>
    <path d="M3 3h16q2 0 2 2v12q0 2-2 2H8l-3 3v-3H3q-2 0-2-2V5q0-2 2-2zM24 12h5q2 0 2 2v9q0 2-2 2v3l-3-3H17q-2 0-2-2v-1" />
    <path d="M8 14l3-8 3 8M9 11.500h4" strokeWidth="2" />
    <path d="M19 15.500h3v5h-3M22 18h3M25 15v7M24 15h4" />
  </Line>
);

const tabs = [
  ["forms.as @ sh", Pencil, 1],
  ["171025.as @ s", Pencil, 1],
  ["Microsoft Wo", Sun, 1],
  ["BMC recruitm", Google, 1],
  ["Recruitment |", Seal, 1],
  ["STI paper ans", Google, 1],
  ["OMR", Crest, 0],
  ["GPSC", Globe, 0],
  ["Inner Master", Crest, 0],
  ["Freeimage.ho", Hand, 1],
];
const bookmarks = [
  [Globe, "Index of D:\\Marwa...", 192],
  [Folder, "AI ToolKit", 119],
  [Tube, "", 45],
  [Knot, "", 45],
  [Globe, "IST 3D Clock", 139],
  [Globe, "", 45],
  [Globe, <span key="me">ME<Boxed>2</Boxed></span>, 91],
  [Globe, "Index of D:\\Marwa...", 192],
  [Globe, "skribbl - Free Multi...", 193],
  [Globe, "Venice Chat - Veni...", 192],
  [Pencil, "ldce.as", 100],
  [Globe, "classGroup", 129],
  [Globe, "Exam", 92],
  [GreenO, "Open Multiple URL...", 192],
  [Kangaroo, "", 45],
];
const navItems = [
  ["About Us", true],
  ["Candidate Corner", true],
  ["Previous Year Question Paper", true],
  ["FAQ", true],
  ["Downloads", true],
  ["Contact Us", false],
];
const quick = [
  [ExamArt, "Exam"],
  [InterviewArt, "Interview"],
  [ResultArt, "Result"],
  [DownloadArt, "Download"],
];
const notices = [
  "View your OMR/CBRT response sheet for all recently taken exams. (Please enter your Roll Number for the Main Exam; do not enter your Ticket Number.)",
  "View marks obtained in the Preliminary Examination for Advt. No. 27/2025-26, State Tax Inspector, Class-3 held on 04.01.2026 (up to 24.02.2026). (Please enter your Roll Number, Confirmation Number, and Birth Date.)",
  "View marks obtained in the Preliminary Examination for Advt. No. 240/2024-25, Gujarat Administrative Service, Class-1; Gujarat Civil Service, Class 1 & 2; and Gujarat State Municipal Chief Officers Service, Class-2. (Please enter your Roll Number, Confirmation Number, and Birth Date.)",
];
const corner = [
  "How to Apply",
  "Online Application",
  "Exam Syllabus",
  "Exam Schedule",
  "Download Call Letter",
  "Processing Fees to Unblock Call Letter",
  "",
  "",
  "Consent Refund Status",
];
const apps = [
  [<Windows key="i" />],
  [<Lens key="i" />],
  [<Files key="i" />, "z.Poojan a", true],
  [<OneNote key="i" />],
  [<Fox key="i" />],
  [<Chrome key="i" />],
  [<Chrome key="i" badge="person" />],
  [<Chrome key="i" badge="D" />],
  [<Chrome key="i" badge="night" />],
  [<Chrome key="i" badge="man" />],
  [<Brave key="i" />],
  [<Chrome key="i" badge="C" />, "ChatGPT -", true],
  [<Edge key="i" id="a" badge="eye" />, "OMR and", true, true],
  [<Swirl key="i" />],
  [<Ring key="i" />, "130226.as", true],
  [<Edge key="i" id="b" badge="face" />],
  [<Edge key="i" id="c" badge="calc" />],
  [<Npp key="i" />],
  [<Copilot key="i" />],
];

export default function App() {
  return (
    <Screen>
      <Global />
      <TabStrip>
        <TabMenu aria-label="Search tabs">
          <Line s={16} vb="0 0 16 16" w={1.5}><path d="M1 5l7 7 7-7" /></Line>
        </TabMenu>
        {tabs.map(([name, Ico, fade], i) => (
          <Tab key={i} $active={i === 6} $rule={i !== 5 && i !== 6}>
            <Ico />
            <TabName $fade={fade}>{name}</TabName>
            <CloseTab aria-label={`Close ${name}`}><Cross /></CloseTab>
          </Tab>
        ))}
        <NewTab aria-label="New tab">
          <Line s={18} vb="0 0 18 18"><path d="M9 0v18M0 9h18" /></Line>
        </NewTab>
        <WindowButtons>
          <WindowButton aria-label="Minimize"><Line s={12} vb="0 0 12 12"><path d="M0 6h12" /></Line></WindowButton>
          <WindowButton aria-label="Restore">
            <Line s={14} vb="0 0 14 14"><rect x="1" y="3" width="9.500" height="10" rx="1.500" /><path d="M4 1h7q2 0 2 2v8" /></Line>
          </WindowButton>
          <WindowButton aria-label="Close"><Cross s={14} /></WindowButton>
        </WindowButtons>
      </TabStrip>

      <Toolbar>
        <ToolButton $w={50} $dim aria-label="Back"><Line><path d="M20 10H1M9 2l-8 8 8 8" /></Line></ToolButton>
        <ToolButton aria-label="Refresh"><Line w={1.6}><path d="M18 10a8 8 0 1 1-3-6.300L17 5.500M17.500 1v5h-5" /></Line></ToolButton>
        <Address>
          <Line><rect x="3" y="7" width="14" height="11" rx="2" /><path d="M6.500 7V5a3.500 3.500 0 0 1 7 0v2M10 12v1" /></Line>
          <Url aria-label="Address" defaultValue="https://gpsc.gujarat.gov.in/OMR" />
          <ToolButton $w={34} $dim aria-label="Tracking"><Line><path d="M1 1l18 18M1 11q3-5 7-5.800M12 5.200q5 1 7 5.800M8 8.500a3.500 3.500 0 1 0 5 5" /></Line></ToolButton>
          <ToolButton $w={34} $dim aria-label="Page options"><Line><circle cx="10" cy="10" r="9.300" /><path d="M6 10h.1M10 10h.1M14 10h.1" strokeWidth="2.200" /></Line></ToolButton>
          <Rule />
          <ToolButton $w={38} $dim aria-label="Add to favourites"><Line><path d="M10 1l2.800 5.900 6.200.8-4.600 4.400 1.200 6.400L10 15.400l-5.600 3.100 1.200-6.400L1 7.700l6.200-.8z" /></Line></ToolButton>
        </Address>
        <ToolButton aria-label="Extensions"><Line w={1.6}><path d="M5 4h3a2.300 2.300 0 0 1 4.500 0H16v4.500a2 2 0 0 0 0 4V17h-3.500a2.300 2.300 0 0 1-4.500 0H5v-4.500a2.300 2.300 0 0 1 0-4.500z" /></Line></ToolButton>
        <Rule />
        <ToolButton aria-label="Favourites"><Line w={1.5}><path d="M12 7L9 1 6.500 7 1 8l4 4-1 6 5-3M13 8h6M13 12h6M13 16h6" /></Line></ToolButton>
        <Private>
          InPrivate
          <Icon w={30} h={30}>
            <circle cx="15" cy="15" r="15" fill="#2b2b2b" />
            <ellipse cx="15" cy="10.500" rx="5.500" ry="6" fill="#a5a5a5" />
            <path d="M4.500 25q3-8 10.500-8t10.500 8Q21 30 15 30T4.500 25z" fill="#a5a5a5" />
          </Icon>
        </Private>
        <ToolButton aria-label="Settings"><Line><path d="M3 10h.1M10 10h.1M17 10h.1" strokeWidth="2.800" /></Line></ToolButton>
      </Toolbar>

      <Bookmarks aria-label="Bookmarks">
        {bookmarks.map(([Ico, label, w], i) => (
          <Bookmark key={i} href="#" $w={w}><Ico />{label}</Bookmark>
        ))}
        <More aria-label="More bookmarks"><Line s={16} vb="0 0 16 16" w={1.6}><path d="M5 1l7 7-7 7" /></Line></More>
      </Bookmarks>

      <Viewport>
        <Site>
          <Masthead>
            <Emblem />
            <Brand>Gujarat Public Service Commission</Brand>
            <Lions />
            <SearchForm onSubmit={(e) => e.preventDefault()}>
              <SearchBox aria-label="Search" placeholder="Search" />
              <SearchButton>Search</SearchButton>
            </SearchForm>
          </Masthead>
          <MainNav>
            <NavLink href="#" aria-label="Home"><Home /></NavLink>
            {navItems.map(([label, drop]) => (
              <NavLink key={label} href="#">{label}{drop && <Caret />}</NavLink>
            ))}
          </MainNav>
          <Body>
            <QuickLinks>
              <QuickList>
                {quick.map(([Art, label]) => (
                  <QuickLink key={label} href="#"><Art />{label}</QuickLink>
                ))}
                <QuickEnd />
              </QuickList>
              <ScrollTrack $w={19}><Thumb $w={11} $h="436px" $round="0 0 6px 6px" /></ScrollTrack>
            </QuickLinks>
            <Main>
              <Banner>
                <div>
                  <PageTitle>View your OMR / Marks</PageTitle>
                  <Underline />
                  <Crumbs>
                    <Crumb href="#">Home</Crumb>
                    <span>/</span>
                    <Crumb href="#" $current>View your OMR / Marks</Crumb>
                  </Crumbs>
                </div>
                <BackButton>Go Back</BackButton>
              </Banner>
              <Content>
                <Notices>
                  <thead>
                    <NoticeRow><HeadCell>Description</HeadCell><HeadCell>Link</HeadCell></NoticeRow>
                  </thead>
                  <tbody>
                    {notices.map((text, i) => (
                      <NoticeRow key={i} $tint={i !== 1}>
                        <Cell>{text}</Cell>
                        <Cell><TextLink href="#" $bright={i === 1}>Click here</TextLink></Cell>
                      </NoticeRow>
                    ))}
                  </tbody>
                </Notices>
                <Corner>
                  <CornerTitle>Candidate Corner</CornerTitle>
                  <Underline />
                  <CornerList>
                    {corner.map((label, i) => (
                      <CornerItem key={i}><Bullet />{label && <a href="#">{label}</a>}</CornerItem>
                    ))}
                  </CornerList>
                </Corner>
              </Content>
            </Main>
          </Body>
        </Site>
        <ScrollTrack $w={13} $pad="6px 0">
          <svg width="8" height="6" viewBox="0 0 8 6"><path d="M4 0l4 6H0z" fill="#d0e6fb" /></svg>
          <ScrollBody><Thumb $w={7} $h="370px" $round="4px" /></ScrollBody>
          <svg width="8" height="6" viewBox="0 0 8 6"><path d="M4 6L0 0h8z" fill="#d0e6fb" /></svg>
        </ScrollTrack>
        <Floating>
          <Language>
            <Translate />
            <LanguageSelect aria-label="Language"><option>English</option></LanguageSelect>
            <Line s={30} vb="0 0 30 30" w={2.8}><path d="M9 11l6 7 6-7" /></Line>
          </Language>
          <Access aria-label="Accessibility">
            <Icon w={34} h={42} vb="0 0 34 42">
              <circle cx="17" cy="4.500" r="4.500" fill="#fff" />
              <path d="M2 11.500q15 4 30 0" stroke="#fff" strokeWidth="4" strokeLinecap="round" fill="none" />
              <path d="M12 13h10v12l3 14q-2 4-5 1l-3-13-3 13q-3 3-5-1l3-14z" fill="#fff" />
            </Icon>
          </Access>
        </Floating>
        <StatusBubble>https://www.formonline.co.in/GPSC_5/</StatusBubble>
      </Viewport>

      <Taskbar>
        <Weather aria-label="Widgets"><Torch /></Weather>
        {apps.map(([ico, label, mark, active], i) => (
          <TaskApp key={i} $label={label} $mark={mark} $active={active} aria-label={label ? undefined : `App ${i + 1}`}>
            {ico}
            {label}
          </TaskApp>
        ))}
        <Tray>
          <Line s={16} vb="0 0 16 16" w={1.6}><path d="M1 11l7-7 7 7" /></Line>
          <TrayNumber>88</TrayNumber>
          <TrayLang $align="center">ENG<br />IN</TrayLang>
          <Line w={1.6}><path d="M1 8q9-8 18 0M4 11.500q6-5 12 0M7 14.500q3-2.500 6 0" /><circle cx="10" cy="17" r="1" fill="currentColor" /></Line>
          <Line w={1.5}><path d="M1 7h3l5-4v14l-5-4H1zM12 7q2 3 0 6M14.500 4.500q4 5.500 0 11" /></Line>
          <Icon w={26} h={16} vb="0 0 26 16">
            <rect x="1" y="2" width="21" height="12" rx="3.500" fill="none" stroke="#fff" strokeWidth="1.500" />
            <rect x="3.500" y="4.500" width="15" height="7" rx="1" fill="#fff" />
            <path d="M24 6v4" stroke="#fff" strokeWidth="2" />
          </Icon>
          <Clock $align="right">04:28:36<br />13-02-2026</Clock>
        </Tray>
      </Taskbar>
    </Screen>
  );
}
